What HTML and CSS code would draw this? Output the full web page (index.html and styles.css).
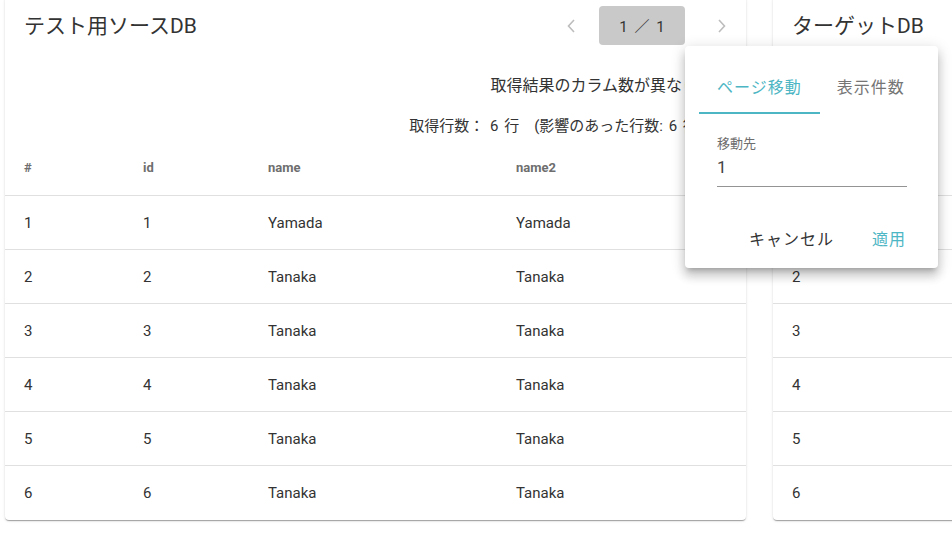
FILE: index.html
```html
<!DOCTYPE html>
<html lang="ja">
<head>
<meta charset="utf-8">
<title>DB比較</title>
<link rel="stylesheet" href="styles.css">
</head>
<body>
<div class="page">
  <section class="card">
    <header class="card-head">
      <h2 class="title">テスト用ソースDB</h2>
      <nav class="pager">
        <button class="chev chev-prev" aria-label="前へ">
          <svg width="10" height="16" viewBox="0 0 10 16"><path d="M8 2 L2.5 8 L8 14" fill="none" stroke="#bdbdbd" stroke-width="1.6"/></svg>
        </button>
        <button class="page-btn">1 ／ 1</button>
        <button class="chev chev-next" aria-label="次へ">
          <svg width="10" height="16" viewBox="0 0 10 16"><path d="M2 2 L7.5 8 L2 14" fill="none" stroke="#bdbdbd" stroke-width="1.6"/></svg>
        </button>
      </nav>
    </header>
    <div class="messages">
      <p class="msg msg-main">取得結果のカラム数が異なります</p>
      <p class="msg msg-sub">取得行数：&nbsp;6 行　(影響のあった行数: 6 行)</p>
    </div>
    <div class="table">
      <div class="row head"><span>#</span><span>id</span><span>name</span><span>name2</span></div>
      <div class="row"><span>1</span><span>1</span><span>Yamada</span><span>Yamada</span></div>
      <div class="row"><span>2</span><span>2</span><span>Tanaka</span><span>Tanaka</span></div>
      <div class="row"><span>3</span><span>3</span><span>Tanaka</span><span>Tanaka</span></div>
      <div class="row"><span>4</span><span>4</span><span>Tanaka</span><span>Tanaka</span></div>
      <div class="row"><span>5</span><span>5</span><span>Tanaka</span><span>Tanaka</span></div>
      <div class="row"><span>6</span><span>6</span><span>Tanaka</span><span>Tanaka</span></div>
    </div>
  </section>

  <section class="card card-target">
    <header class="card-head">
      <h2 class="title">ターゲットDB</h2>
    </header>
    <div class="messages">
      <p class="msg msg-main">&nbsp;</p>
      <p class="msg msg-sub">&nbsp;</p>
    </div>
    <div class="table">
      <div class="row head"><span>#</span></div>
      <div class="row"><span>1</span></div>
      <div class="row"><span>2</span></div>
      <div class="row"><span>3</span></div>
      <div class="row"><span>4</span></div>
      <div class="row"><span>5</span></div>
      <div class="row"><span>6</span></div>
    </div>
  </section>
</div>

<div class="popup">
  <div class="tabs">
    <div class="tab active">ページ移動</div>
    <div class="tab">表示件数</div>
  </div>
  <div class="tab-body">
    <label class="field-label">移動先</label>
    <div class="field-value">1</div>
  </div>
  <div class="actions">
    <button class="act">キャンセル</button>
    <button class="act primary">適用</button>
  </div>
</div>
</body>
</html>
```

FILE: styles.css
```css
* { box-sizing: border-box; }
html, body {
  margin: 0;
  padding: 0;
  background: #ffffff;
  overflow: hidden;
  width: 952px;
  height: 545px;
}
body {
  font-family: Roboto, "Noto Sans CJK JP", sans-serif;
  color: #333333;
  position: relative;
}
.page {
  display: flex;
  gap: 27px;
  padding-left: 5px;
  margin-top: -4px;
  width: 1600px;
}
.card {
  width: 741px;
  flex: none;
  background: #fff;
  border-radius: 4px;
  box-shadow: 0 2px 1px -1px rgba(0,0,0,.2), 0 1px 1px 0 rgba(0,0,0,.14), 0 1px 3px 0 rgba(0,0,0,.12);
}
.card-head {
  display: flex;
  align-items: center;
  height: 49px;
  padding: 10px 6px 0 19px;
}
.title {
  margin: 0;
  font-size: 21px;
  font-weight: 400;
  color: #333;
  flex: 1;
  line-height: 28px;
}
.pager {
  display: flex;
  align-items: center;
}
button {
  font-family: inherit;
  border: none;
  background: none;
  padding: 0;
  cursor: pointer;
}
.chev {
  width: 36px;
  height: 39px;
  display: flex;
  align-items: center;
  justify-content: center;
}
.chev-prev { margin-right: 10px; }
.chev-next { margin-left: 19px; }
.page-btn {
  width: 86px;
  height: 39px;
  background: #c9c9c9;
  border-radius: 4px;
  font-size: 15px;
  color: #333;
  word-spacing: 3px;
}
.messages {
  display: flex;
  flex-direction: column;
  align-items: flex-end;
  padding: 29px 16px 0 0;
}
.msg { margin: 0; white-space: nowrap; }
.msg-main {
  font-size: 16px;
  line-height: 24px;
}
.msg-sub {
  font-size: 15px;
  line-height: 20px;
  margin-top: 18px;
  word-spacing: 2px;
  margin-right: 27px;
}
.table { margin-top: 4px; }
.row {
  display: grid;
  grid-template-columns: 119px 125px 248px 1fr;
  align-items: center;
  padding-left: 19px;
  height: 54px;
  border-bottom: 1px solid #e0e0e0;
  font-size: 15px;
  color: #333;
}
.card-target .row { grid-template-columns: 1fr; }
.row:last-child { border-bottom: none; }
.row.head {
  height: 56px;
  font-size: 13px;
  font-weight: 700;
  color: #6e6e6e;
}

.popup {
  position: absolute;
  left: 685px;
  top: 46px;
  width: 253px;
  height: 222px;
  background: #fff;
  border-radius: 4px;
  box-shadow: 0 5px 5px -3px rgba(0,0,0,.2), 0 8px 10px 1px rgba(0,0,0,.14), 0 3px 14px 2px rgba(0,0,0,.12);
  padding: 20px 14px 0 14px;
}
.tabs {
  display: flex;
  height: 48px;
}
.tab {
  width: 122px;
  display: flex;
  align-items: center;
  justify-content: center;
  padding-bottom: 8px;
  font-size: 16px;
  letter-spacing: 1px;
  color: #757575;
}
.tab.active {
  color: #4db6c4;
  border-bottom: 2px solid #4db6c4;
  padding-bottom: 6px;
}
.tab:not(.active) { width: 105px; justify-content: flex-start; padding-left: 17px; }
.tab-body {
  height: 96px;
  padding: 22px 17px 0 18px;
}
.field-label {
  display: block;
  font-size: 13px;
  line-height: 16px;
  color: #6e6e6e;
}
.field-value {
  font-size: 17px;
  line-height: 24px;
  color: #444;
  border-bottom: 1px solid #949494;
  padding-bottom: 7px;
  margin-top: 3px;
}
.actions {
  display: flex;
  justify-content: flex-end;
  align-items: center;
  gap: 6px;
  padding-right: 2px;
  margin-top: 10px;
}
.act {
  font-size: 16px;
  letter-spacing: 1px;
  color: #333;
  height: 36px;
  padding: 0 16px;
}
.act.primary { color: #4db6c4; }
```
